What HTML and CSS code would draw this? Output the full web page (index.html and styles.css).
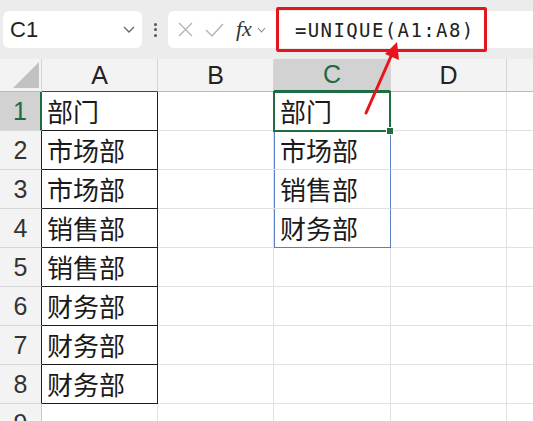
FILE: index.html
```html
<!DOCTYPE html>
<html lang="zh">
<head>
<meta charset="utf-8">
<link rel="stylesheet" href="styles.css">
</head>
<body>
<div class="app">
  <div class="toolbar">
    <div class="namebox">
      <span class="ref">C1</span>
      <svg class="chev" width="12" height="7" viewBox="0 0 12 7"><polyline points="1,1 6,6 11,1" fill="none" stroke="#666" stroke-width="1.3"/></svg>
    </div>
    <div class="grip"><span></span><span></span><span></span></div>
    <div class="fbar">
      <svg class="ico-x" width="15" height="15" viewBox="0 0 15 15"><path d="M1 1 L14 14 M14 1 L1 14" stroke="#b4b4b4" stroke-width="1.4" fill="none"/></svg>
      <svg class="ico-ok" width="19" height="14" viewBox="0 0 19 14"><polyline points="1,7 7,13 18,1" fill="none" stroke="#b4b4b4" stroke-width="1.4"/></svg>
      <span class="fx">fx</span>
      <svg class="chev2" width="9" height="6" viewBox="0 0 9 6"><polyline points="1,1 4.5,5 8,1" fill="none" stroke="#888" stroke-width="1.1"/></svg>
      <div class="formula">=UNIQUE(A1:A8)</div>
    </div>
  </div>

  <div class="sheet">
    <div class="hd corner"><svg width="26" height="26" viewBox="0 0 26 26"><polygon points="26,0 26,26 0,26" fill="#c2c2c2"/></svg></div>
    <div class="hd col col-a">A</div>
    <div class="hd col">B</div>
    <div class="hd col sel">C</div>
    <div class="hd col">D</div>
    <div class="hd col"></div>

    <div class="rh sel-r">1</div><div class="c a">部门</div><div class="c"></div><div class="c t r1"><span class="active"></span>部门</div><div class="c"></div><div class="c"></div>
    <div class="rh blk">2</div><div class="c a">市场部</div><div class="c"></div><div class="c t rg">市场部</div><div class="c"></div><div class="c"></div>
    <div class="rh blk">3</div><div class="c a">市场部</div><div class="c"></div><div class="c t rg">销售部</div><div class="c"></div><div class="c"></div>
    <div class="rh blk">4</div><div class="c a">销售部</div><div class="c"></div><div class="c t rg rb">财务部</div><div class="c"></div><div class="c"></div>
    <div class="rh blk">5</div><div class="c a">销售部</div><div class="c"></div><div class="c"></div><div class="c"></div><div class="c"></div>
    <div class="rh blk">6</div><div class="c a">财务部</div><div class="c"></div><div class="c"></div><div class="c"></div><div class="c"></div>
    <div class="rh blk">7</div><div class="c a">财务部</div><div class="c"></div><div class="c"></div><div class="c"></div><div class="c"></div>
    <div class="rh blk">8</div><div class="c a">财务部</div><div class="c"></div><div class="c"></div><div class="c"></div><div class="c"></div>
    <div class="rh">9</div><div class="c"></div><div class="c"></div><div class="c"></div><div class="c"></div><div class="c"></div>
  </div>

  <svg class="arrow" width="533" height="421" viewBox="0 0 533 421">
    <line x1="366" y1="113" x2="392" y2="54" stroke="#e8141b" stroke-width="3" stroke-linecap="round"/>
    <polygon points="397,42 399,60 385,54" fill="#e8141b"/>
  </svg>
</div>
</body>
</html>
```

FILE: styles.css
```css
html, body {
  margin: 0;
  padding: 0;
  width: 533px;
  height: 421px;
  overflow: hidden;
  background: #ffffff;
}

.app {
  position: relative;
  width: 533px;
  height: 421px;
  overflow: hidden;
  font-family: "Liberation Sans", "DejaVu Sans", sans-serif;
}

.toolbar {
  height: 59px;
  background: #ececec;
  display: flex;
  align-items: center;
  padding-left: 3px;
  box-sizing: border-box;
}

.namebox {
  width: 139px;
  height: 37px;
  background: #ffffff;
  border-radius: 6px;
  display: flex;
  align-items: center;
  box-sizing: border-box;
  padding-left: 7px;
  padding-right: 7px;
}

.ref {
  font-size: 22px;
  color: #222;
  flex: 1;
  line-height: 1;
  margin-top: 1px;
}

.grip {
  width: 26px;
  display: flex;
  flex-direction: column;
  align-items: center;
  gap: 2.5px;
}

.grip span {
  width: 3px;
  height: 3px;
  border-radius: 50%;
  background: #555;
}

.fbar {
  flex: 1;
  height: 37px;
  background: #ffffff;
  border-radius: 6px 0 0 6px;
  display: flex;
  align-items: center;
  padding-left: 10px;
}

.ico-ok {
  margin-left: 12px;
}

.fx {
  font-family: "Liberation Serif", "DejaVu Serif", serif;
  font-style: italic;
  font-size: 22px;
  color: #333;
  margin-left: 12px;
  line-height: 1;
  margin-top: -2px;
}

.chev2 {
  margin-left: 5px;
}

.formula {
  margin-left: 10px;
  width: 211px;
  height: 45px;
  box-sizing: border-box;
  border: 3px solid #e3161d;
  border-radius: 2px;
  display: flex;
  align-items: center;
  padding-left: 16px;
  font-family: "DejaVu Sans Mono", "Liberation Mono", monospace;
  font-size: 19px;
  letter-spacing: 1.4px;
  color: #222;
  white-space: nowrap;
}

.sheet {
  display: grid;
  grid-template-columns: 42px 116px 116px 117px 116px 60px;
  grid-template-rows: 33px repeat(9, 39px);
}

.hd {
  background: #f3f3f3;
  border-right: 1px solid #d6d6d6;
  border-bottom: 1px solid #b9b9b9;
  box-sizing: border-box;
  display: flex;
  align-items: center;
  justify-content: center;
  font-size: 25px;
  color: #222;
  line-height: 1;
}

.corner {
  align-items: flex-end;
  justify-content: flex-end;
  padding: 0 2px 3px 0;
}

.col-a {
  border-bottom-color: #444;
}

.hd.sel {
  background: #d2d2d2;
  color: #1d6b40;
  border-bottom: 2px solid #1d6b40;
}

.rh {
  background: #f3f3f3;
  border-right: 1px solid #c9c9c9;
  border-bottom: 1px solid #d6d6d6;
  box-sizing: border-box;
  display: flex;
  align-items: center;
  justify-content: center;
  font-size: 25px;
  color: #333;
  line-height: 1;
}

.rh.blk {
  border-right-color: #1f1f1f;
}

.rh.sel-r {
  background: #d2d2d2;
  color: #1d6b40;
  border-right: 2px solid #1d6b40;
}

.c {
  border-right: 1px solid #e1e1e1;
  border-bottom: 1px solid #e1e1e1;
  box-sizing: border-box;
  display: flex;
  align-items: center;
  padding-left: 5px;
  font-family: "Noto Sans CJK SC", "Noto Sans", sans-serif;
  font-size: 26px;
  color: #1a1a1a;
  line-height: 1;
  white-space: nowrap;
}

.c.a {
  border-right-color: #1f1f1f;
  border-bottom-color: #1f1f1f;
}

.c.t {
  padding-left: 6px;
}

.c.rg {
  border-right-color: #5b7fc6;
  box-shadow: inset 1px 0 0 #5b7fc6;
}

.c.rb {
  border-bottom-color: #5b7fc6;
}

.c.r1 {
  position: relative;
}

.active {
  position: absolute;
  top: -1px;
  left: -1px;
  right: -1px;
  bottom: -2px;
  border: 2px solid #1f6e43;
  z-index: 2;
}

.active::after {
  content: "";
  position: absolute;
  right: -5px;
  bottom: -5px;
  width: 6px;
  height: 6px;
  background: #1f6e43;
  border: 1px solid #ffffff;
}

.arrow {
  position: absolute;
  left: 0;
  top: 0;
  pointer-events: none;
  z-index: 5;
}
```
